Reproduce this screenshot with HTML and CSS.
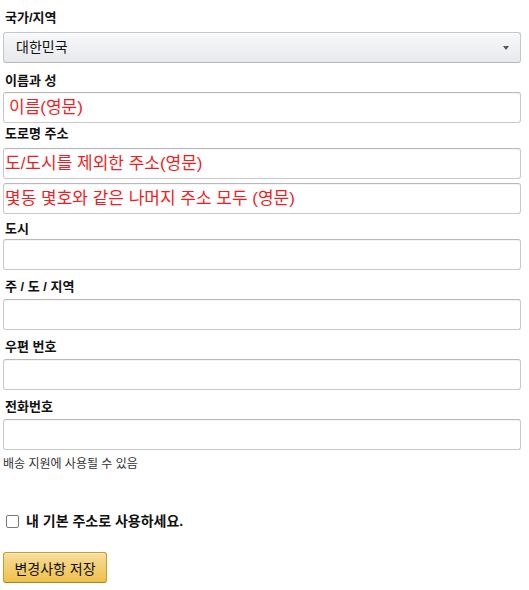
FILE: index.html
```html
<!DOCTYPE html>
<html lang="ko">
<head>
<meta charset="utf-8">
<title>주소 편집</title>
<link rel="stylesheet" href="styles.css">
</head>
<body>
<form class="form">
  <div class="field field-country">
    <label class="field-label">국가/지역</label>
    <div class="dropdown">
      <span class="dropdown-text">대한민국</span>
      <span class="dropdown-arrow"></span>
    </div>
  </div>
  <div class="field field-name">
    <label class="field-label">이름과 성</label>
    <input class="text-input text-input-name" type="text" placeholder="이름(영문)">
  </div>
  <div class="field field-street">
    <label class="field-label">도로명 주소</label>
    <input class="text-input" type="text" placeholder="도/도시를 제외한 주소(영문)">
    <input class="text-input text-input-second" type="text" placeholder="몇동 몇호와 같은 나머지 주소 모두 (영문)">
  </div>
  <div class="field field-city">
    <label class="field-label">도시</label>
    <input class="text-input" type="text">
  </div>
  <div class="field field-std">
    <label class="field-label">주 / 도 / 지역</label>
    <input class="text-input" type="text">
  </div>
  <div class="field field-std">
    <label class="field-label">우편 번호</label>
    <input class="text-input" type="text">
  </div>
  <div class="field field-std">
    <label class="field-label">전화번호</label>
    <input class="text-input" type="text">
  </div>
  <div class="hint">배송 지원에 사용될 수 있음</div>
  <label class="check-row">
    <input class="check-box" type="checkbox">
    <span class="check-text">내 기본 주소로 사용하세요.</span>
  </label>
  <button class="save-button" type="button">변경사항 저장</button>
</form>
</body>
</html>
```
FILE: styles.css
```css
* {
  box-sizing: border-box;
}

html, body {
  margin: 0;
  padding: 0;
  background: #ffffff;
}

body {
  font-family: "Liberation Sans", "Noto Sans CJK KR", sans-serif;
  color: #111111;
  font-size: 14px;
}

.form {
  display: flex;
  flex-direction: column;
  padding: 8px 8px 0 3px;
}

.field {
  display: flex;
  flex-direction: column;
}

.field-label {
  display: block;
  font-size: 13px;
  font-weight: 700;
  line-height: 19px;
  height: 19px;
  padding-left: 2px;
  color: #111111;
}

/* per-field spacing */
.field-country .dropdown { margin-top: 5px; }
.field-name { margin-top: 8px; }
.field-name .text-input { margin-top: 2px; }
.field-street { margin-top: 1px; }
.field-street .text-input { margin-top: 5px; }
.field-street .text-input-second { margin-top: 4px; }
.field-city { margin-top: 5px; }
.field-city .text-input { margin-top: 1px; }
.field-std { margin-top: 7px; }
.field-std .text-input { margin-top: 3px; }

.dropdown {
  display: flex;
  align-items: center;
  justify-content: space-between;
  height: 31px;
  padding: 0 11px 0 12px;
  border: 1px solid #c3c6cb;
  border-bottom-color: #b4b7bc;
  border-radius: 3px;
  background: linear-gradient(to bottom, #f7f8fa, #e7e9ec);
  box-shadow: inset 0 1px 0 rgba(255, 255, 255, 0.6);
}

.dropdown-text {
  font-size: 14px;
  line-height: 19px;
  color: #111111;
}

.dropdown-arrow {
  width: 0;
  height: 0;
  border-left: 3.5px solid transparent;
  border-right: 3.5px solid transparent;
  border-top: 4px solid #555555;
  margin-top: 1px;
}

.text-input {
  display: block;
  width: 100%;
  height: 31px;
  padding: 0 1px;
  border: 1px solid #c9c9c9;
  border-top-color: #b9b9b9;
  border-radius: 3px;
  background: #ffffff;
  font-family: "Liberation Sans", "Noto Sans CJK KR", sans-serif;
  font-size: 17px;
  color: #111111;
  outline: none;
  box-shadow: inset 0 1px 0 rgba(0, 0, 0, 0.04);
}

.text-input-name {
  padding-left: 5px;
}

.text-input::placeholder {
  color: #f01e23;
  opacity: 1;
}

.hint {
  margin-top: 6px;
  font-size: 12px;
  line-height: 16px;
  color: #333333;
}

.check-row {
  display: flex;
  align-items: center;
  margin-top: 40px;
  height: 19px;
}

.check-box {
  appearance: none;
  -webkit-appearance: none;
  width: 13px;
  height: 13px;
  margin: 0 7px 0 3px;
  border: 1px solid #7a7a7a;
  border-radius: 2px;
  background: #ffffff;
}

.check-text {
  font-size: 14px;
  font-weight: 700;
  line-height: 19px;
  color: #111111;
}

.save-button {
  align-self: flex-start;
  margin-top: 21px;
  width: 104px;
  height: 31px;
  padding: 0;
  border: 1px solid #c89a2c;
  border-bottom-color: #a9832a;
  border-radius: 3px;
  background: linear-gradient(to bottom, #f7dd9c, #efc04a);
  box-shadow: inset 0 1px 0 rgba(255, 255, 255, 0.4);
  font-family: "Liberation Sans", "Noto Sans CJK KR", sans-serif;
  font-size: 14px;
  color: #111111;
}
```
